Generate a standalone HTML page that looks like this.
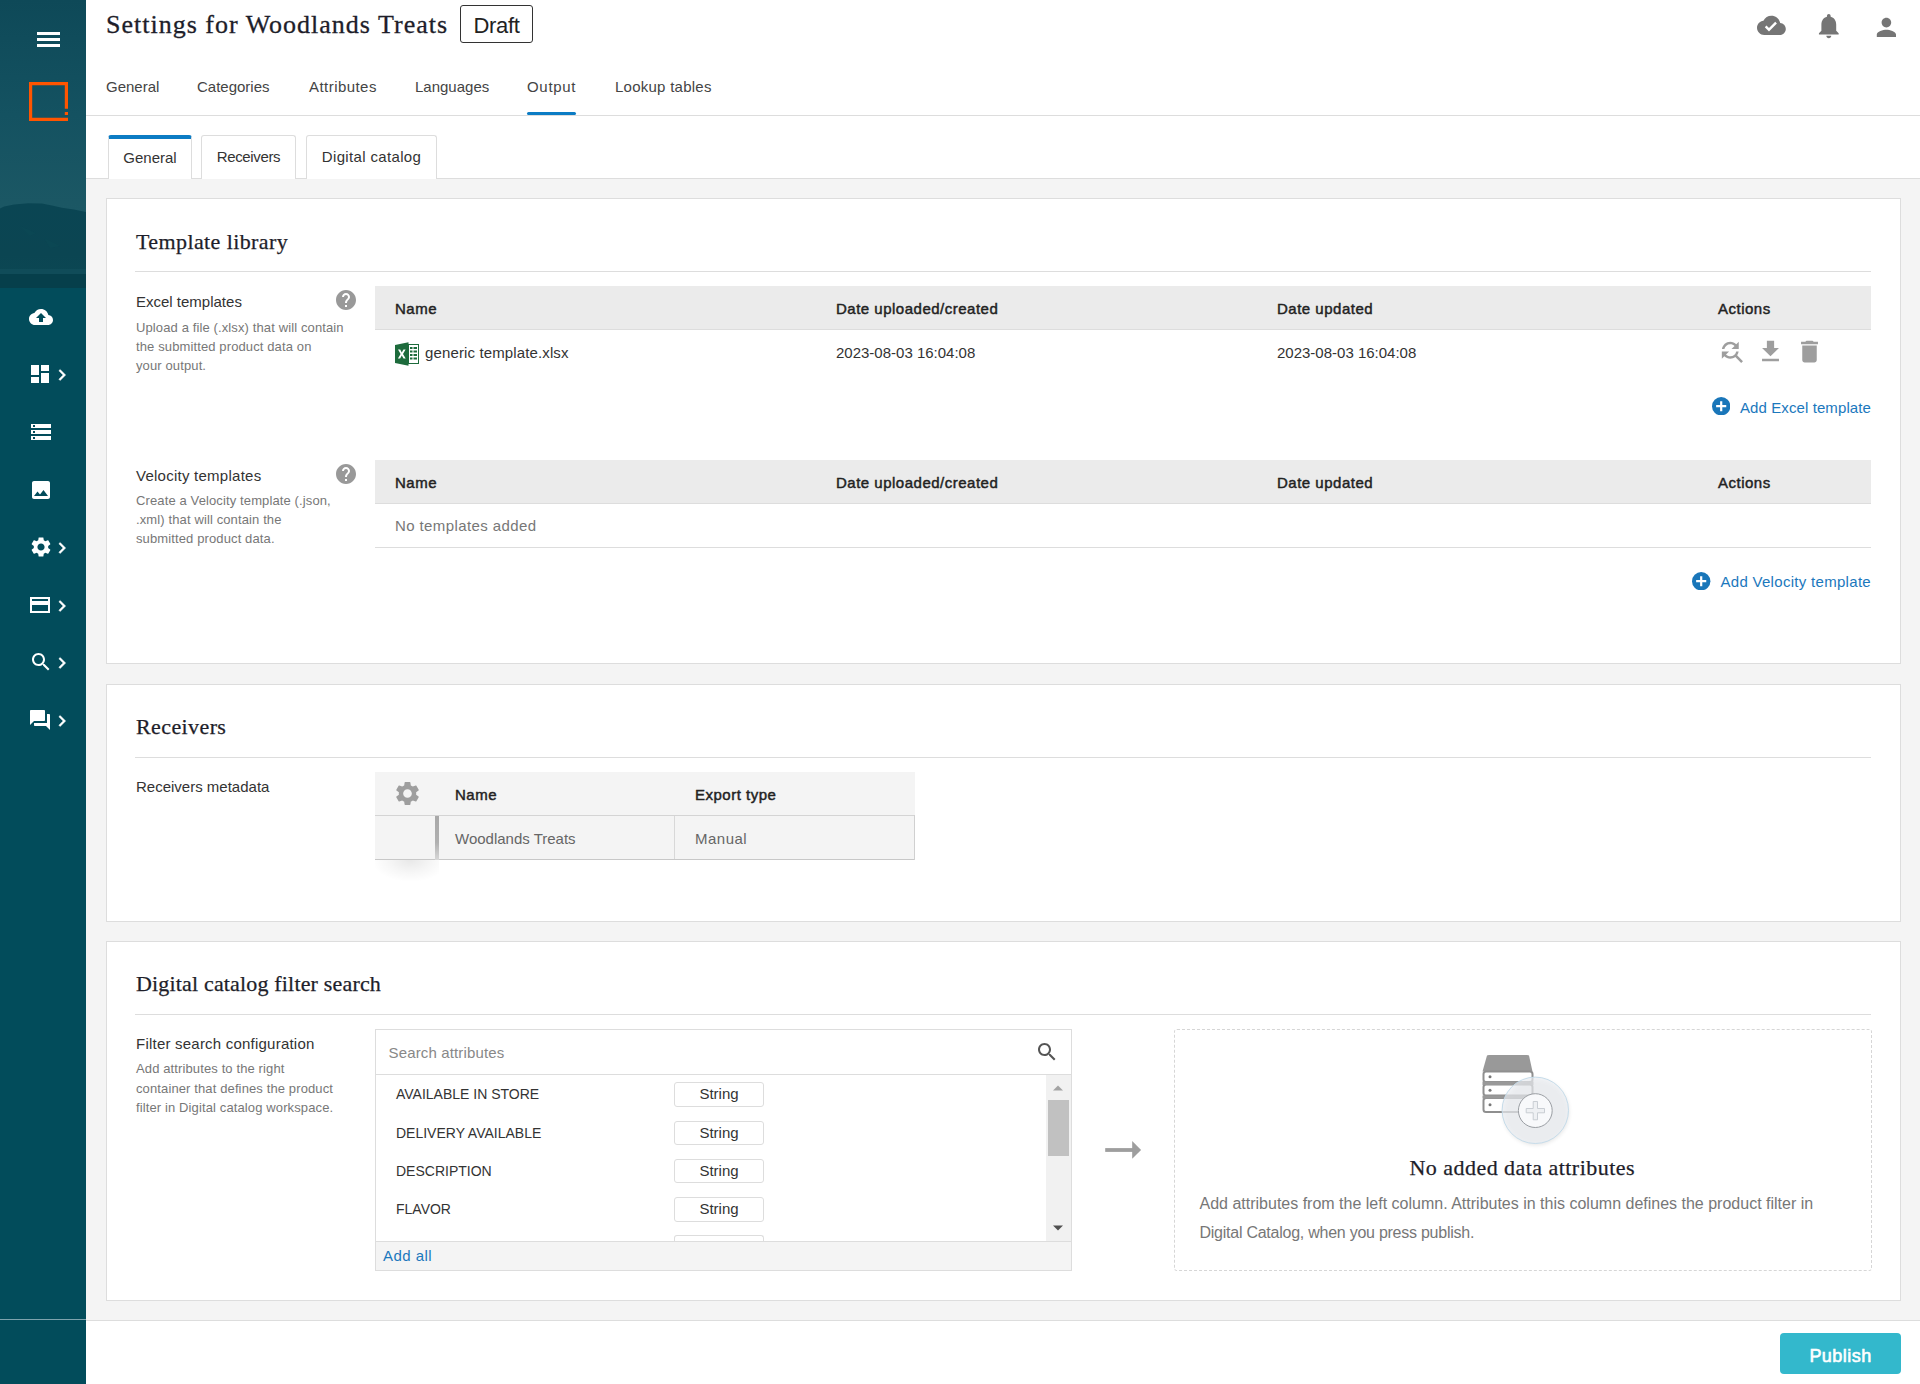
<!DOCTYPE html>
<html><head><meta charset="utf-8">
<style>
*{box-sizing:border-box;margin:0;padding:0}
html,body{width:1920px;height:1384px;overflow:hidden;background:#fff;font-family:"Liberation Sans",sans-serif;color:#333}
.abs{position:absolute}
#side{position:absolute;left:0;top:0;width:86px;height:1384px;background:#024c5b;overflow:hidden}
#side .ico{position:absolute;fill:#fff}
#side .chev{position:absolute;fill:#fff}
#hdr{position:absolute;left:86px;top:0;width:1834px;height:116px;background:#fff;border-bottom:1px solid #ddd}
.serif{font-family:"Liberation Serif",serif}
#title{position:absolute;left:20px;top:7px;font-size:26px;letter-spacing:1.0px;color:#1e1e2a;-webkit-text-stroke:0.3px #1e1e2a;white-space:nowrap;line-height:36px}
#draft{position:absolute;left:374px;top:5px;width:73px;height:38px;border:1px solid #333;border-radius:3px;font-size:22px;color:#222;text-align:center;line-height:40px;letter-spacing:-0.3px}
.nav{position:absolute;top:77px;font-size:15px;color:#444;line-height:20px;white-space:nowrap}
#navbar{position:absolute;left:441px;top:112px;width:49px;height:3px;background:#0c7cc4;border-radius:2px}
.hico{position:absolute;fill:#757575}
#sub{position:absolute;left:86px;top:116px;width:1834px;height:63px;background:#fff;border-bottom:1px solid #ddd}
.stab{position:absolute;top:19px;height:44px;border:1px solid #ddd;border-bottom:none;border-radius:3px 3px 0 0;background:#fff;font-size:15px;color:#333;line-height:42px;text-align:center;white-space:nowrap}
#main{position:absolute;left:86px;top:179px;width:1834px;height:1141px;background:#f4f4f4}
.card{position:absolute;left:20px;width:1795px;background:#fff;border:1px solid #ddd}
.h2{position:absolute;left:29px;font-family:"Liberation Serif",serif;font-size:22px;letter-spacing:0.4px;color:#1e1e2a;white-space:nowrap;line-height:28px;-webkit-text-stroke:0.25px #1e1e2a}
.divl{position:absolute;left:28px;width:1737px;height:1px;background:#ddd}
.lbl{position:absolute;left:29px;font-size:15px;color:#333;white-space:nowrap;line-height:20px}
.desc{position:absolute;left:29px;font-size:13px;color:#777;line-height:19px;white-space:nowrap;letter-spacing:0.12px}
.help{position:absolute;width:20px;height:20px;border-radius:50%;background:#999;color:#fff;font-weight:bold;font-size:15px;text-align:center;line-height:20px}
.thead{position:absolute;width:1496px;height:44px;background:#ebebeb;border-bottom:1px solid #ddd}
.th{position:absolute;top:12px;font-size:15px;font-weight:normal;-webkit-text-stroke:0.45px #222;color:#222;line-height:20px;white-space:nowrap;letter-spacing:0.5px}
.td{position:absolute;font-size:15px;color:#333;line-height:20px;white-space:nowrap}
.link{position:absolute;font-size:15px;color:#1b78bd;line-height:20px;white-space:nowrap}
.aico{fill:#9e9e9e}
.badge{position:absolute;width:90px;height:24.5px;border:1px solid #ddd;border-radius:3px;background:#fff;font-size:15px;color:#333;text-align:center;line-height:22.5px}
#foot{position:absolute;left:86px;top:1320px;width:1834px;height:64px;background:#fff;border-top:1px solid #ddd}
#publish{position:absolute;left:1694px;top:12px;width:121px;height:41px;background:#33b8cc;border-radius:4px;color:#fff;font-weight:normal;-webkit-text-stroke:0.6px #fff;letter-spacing:0.45px;font-size:18px;text-align:center;line-height:41px;padding-top:5px;line-height:36px}
</style></head><body>

<div id="side">
  <svg class="abs" style="left:0;top:0" width="86" height="288" viewBox="0 0 86 288">
    <defs>
      <linearGradient id="sky" x1="0" y1="0" x2="0" y2="1">
        <stop offset="0" stop-color="#0e4958"/>
        <stop offset="0.4" stop-color="#145261"/>
        <stop offset="0.7" stop-color="#1b5764"/>
        <stop offset="1" stop-color="#1e5a67"/>
      </linearGradient>
      <linearGradient id="mt" x1="0" y1="0" x2="0" y2="1">
        <stop offset="0" stop-color="#0a4553"/>
        <stop offset="0.6" stop-color="#0b4552"/>
        <stop offset="1" stop-color="#0c4854"/>
      </linearGradient>
    </defs>
    <rect width="86" height="288" fill="url(#sky)"/>
    <path d="M0 208.5 L4 206.5 L14 204.5 L28 203.3 L42 203.6 L52 205.5 L62 207.8 L74 209.5 L86 212 L86 288 L0 288 Z" fill="url(#mt)"/>
    <path d="M20 226 L36 233 L30 236 Z" fill="#11505c" opacity="0.2"/>
    <path d="M44 238 L60 246 L50 248 Z" fill="#11505c" opacity="0.2"/>
    <rect y="269" width="86" height="5" fill="#104c59"/>
    <rect y="274" width="86" height="14" fill="#063f4b"/>
  </svg>
  <div class="abs" style="left:37px;top:32px;width:22.5px;height:3px;background:#fff"></div>
  <div class="abs" style="left:37px;top:38px;width:22.5px;height:3px;background:#fff"></div>
  <div class="abs" style="left:37px;top:44px;width:22.5px;height:3px;background:#fff"></div>
  <svg class="abs" style="left:29px;top:82px" width="39" height="39" viewBox="0 0 39 39">
    <path d="M0 0H39V26.8H35.8V3.2H3.2V35.8H39V39H0Z" fill="#ff5500"/>
    <rect x="35.8" y="30" width="3.2" height="3" fill="#ff5500"/>
  </svg>
  <div class="abs" style="left:0;top:1319px;width:86px;height:1px;background:#7da3ad"></div>
  <svg class="ico" style="left:29px;top:305px" width="24" height="24" viewBox="0 0 24 24"><path d="M19.35 10.04C18.67 6.59 15.640 4 12 4 9.11 4 6.6 5.64 5.35 8.04 2.34 8.36 0 10.91 0 14c0 3.310 2.69 6 6 6h13c2.76 0 5-2.24 5-5 0-2.64-2.05-4.78-4.65-4.96zM14 13v4h-4v-4H7l5-5 5 5h-3z"/></svg>
  <svg class="ico" style="left:28px;top:362px" width="24" height="24" viewBox="0 0 24 24"><path d="M3 13h8V3H3v10zm0 8h8v-6H3v6zm10 0h8V11h-8v10zm0-18v6h8V3h-8z"/></svg>
  <svg class="ico" style="left:28.5px;top:420px" width="24" height="24" viewBox="0 0 24 24"><path d="M2 20h20v-4H2v4zm2-3h2v2H4v-2zM2 4v4h20V4H2zm4 3H4V5h2v2zm-4 7h20v-4H2v4zm2-3h2v2H4v-2z"/></svg>
  <svg class="ico" style="left:28.5px;top:478px" width="24" height="24" viewBox="0 0 24 24"><path d="M21 19V5c0-1.1-.9-2-2-2H5c-1.1 0-2 .9-2 2v14c0 1.1.9 2 2 2h14c1.1 0 2-.9 2-2zM8.5 13.5l2.5 3.01L14.5 12l4.5 6H5l3.5-4.5z"/></svg>
  <svg class="ico" style="left:28.5px;top:535px" width="24" height="24" viewBox="0 0 24 24"><path d="M19.14 12.94c.04-.3.06-.61.06-.94 0-.32-.02-.64-.07-.94l2.03-1.58c.18-.14.23-.41.12-.61l-1.92-3.32c-.12-.22-.37-.29-.59-.22l-2.39.96c-.5-.38-1.03-.7-1.62-.94l-.36-2.54c-.04-.24-.24-.41-.48-.41h-3.84c-.24 0-.43.17-.47.41l-.36 2.54c-.59.24-1.13.57-1.62.94l-2.39-.96c-.22-.08-.47 0-.59.22L2.74 8.87c-.12.21-.08.47.12.61l2.03 1.58c-.05.3-.09.63-.09.94s.02.64.07.94l-2.030 1.58c-.18.14-.23.41-.12.61l1.92 3.32c.12.22.37.29.59.22l2.39-.96c.5.38 1.03.7 1.62.94l.36 2.54c.05.24.24.41.48.41h3.84c.24 0 .44-.17.47-.41l.36-2.54c.59-.24 1.13-.56 1.62-.94l2.39.96c.22.08.47 0 .59-.22l1.92-3.32c.12-.22.07-.47-.12-.61l-2.01-1.58zM12 15.6c-1.98 0-3.6-1.62-3.6-3.6s1.62-3.6 3.6-3.6 3.6 1.62 3.6 3.6-1.62 3.6-3.6 3.6z"/></svg>
  <svg class="ico" style="left:28px;top:593px" width="24" height="24" viewBox="0 0 24 24"><path fill-rule="evenodd" d="M2 4h20v16H2zM4 12v6h16v-6zM4 6v2h16V6z"/></svg>
  <svg class="ico" style="left:28.5px;top:650px" width="24" height="24" viewBox="0 0 24 24"><path d="M15.5 14h-.79l-.28-.27C15.41 12.59 16 11.110 16 9.5 16 5.91 13.09 3 9.5 3S3 5.91 3 9.5 5.91 16 9.5 16c1.61 0 3.09-.59 4.23-1.57l.27.28v.79l5 4.99L20.49 19l-4.99-5zm-6 0C7.01 14 5 11.99 5 9.5S7.01 5 9.5 5 14 7.01 14 9.5 11.99 14 9.5 14z"/></svg>
  <svg class="ico" style="left:28.2px;top:708px" width="24" height="24" viewBox="0 0 24 24"><path d="M21 6h-2v9H6v2c0 .55.45 1 1 1h11l4 4V7c0-.55-.45-1-1-1zm-4 6V3c0-.55-.45-1-1-1H3c-.55 0-1 .45-1 1v14l4-4h10c.55 0 1-.45 1-1z"/></svg>
  <svg class="chev" style="left:51px;top:364px" width="22" height="22" viewBox="0 0 24 24"><path d="M10 6L8.59 7.41 13.17 12l-4.58 4.59L10 18l6-6z" stroke="#fff" stroke-width="0.5"/></svg>
  <svg class="chev" style="left:51px;top:537px" width="22" height="22" viewBox="0 0 24 24"><path d="M10 6L8.59 7.41 13.17 12l-4.58 4.59L10 18l6-6z" stroke="#fff" stroke-width="0.5"/></svg>
  <svg class="chev" style="left:51px;top:595px" width="22" height="22" viewBox="0 0 24 24"><path d="M10 6L8.59 7.41 13.17 12l-4.58 4.59L10 18l6-6z" stroke="#fff" stroke-width="0.5"/></svg>
  <svg class="chev" style="left:51px;top:652px" width="22" height="22" viewBox="0 0 24 24"><path d="M10 6L8.59 7.41 13.17 12l-4.58 4.59L10 18l6-6z" stroke="#fff" stroke-width="0.5"/></svg>
  <svg class="chev" style="left:51px;top:710px" width="22" height="22" viewBox="0 0 24 24"><path d="M10 6L8.59 7.41 13.17 12l-4.58 4.59L10 18l6-6z" stroke="#fff" stroke-width="0.5"/></svg>
</div>

<div id="hdr">
  <div id="title" class="serif">Settings for Woodlands Treats</div>
  <div id="draft">Draft</div>
  <div class="nav" style="left:20px">General</div>
  <div class="nav" style="left:111px">Categories</div>
  <div class="nav" style="left:223px;letter-spacing:0.45px">Attributes</div>
  <div class="nav" style="left:329px">Languages</div>
  <div class="nav" style="left:441px;letter-spacing:0.7px">Output</div>
  <div class="nav" style="left:529px;letter-spacing:0.25px">Lookup tables</div>
  <div id="navbar"></div>
</div>

<div id="sub">
  <div class="stab" style="left:22px;width:84px;border-top:4px solid #0c7cc4;line-height:37px">General</div>
  <div class="stab" style="left:115px;width:95px;letter-spacing:-0.35px">Receivers</div>
  <div class="stab" style="left:220px;width:131px;letter-spacing:0.35px">Digital catalog</div>
</div>

<div id="main">
  <div class="card" id="c1" style="top:19px;height:466px"></div>
  <div class="card" id="c2" style="top:505px;height:238px"></div>
  <div class="card" id="c3" style="top:762px;height:360px"></div>
</div>


<div id="layer" class="abs" style="left:0;top:0;width:1920px;height:1384px">
  <!-- header icons -->
  <svg class="hico" style="left:1757px;top:10.8px" width="28.8" height="28.8" viewBox="0 0 24 24"><path d="M19.35 10.04C18.67 6.59 15.64 4 12 4 9.11 4 6.6 5.64 5.35 8.04 2.34 8.36 0 10.91 0 14c0 3.31 2.69 6 6 6h13c2.76 0 5-2.24 5-5 0-2.64-2.05-4.78-4.65-4.96zM10 17l-3.5-3.5 1.41-1.41L10 14.17 15.18 9l1.41 1.41L10 17z"/></svg>
  <svg class="hico" style="left:1814px;top:10.9px" width="29.6" height="29.6" viewBox="0 0 24 24"><path d="M12 22c1.1 0 2-.9 2-2h-4c0 1.1.89 2 2 2zm6-6v-5c0-3.07-1.64-5.64-4.5-6.32V4c0-.83-.67-1.5-1.5-1.5s-1.5.67-1.5 1.5v.68C7.63 5.36 6 7.92 6 11v5l-2 2v1h16v-1l-2-2z"/></svg>
  <svg class="hico" style="left:1872px;top:12.9px" width="28.8" height="28.8" viewBox="0 0 24 24"><path d="M12 12c2.21 0 4-1.79 4-4s-1.79-4-4-4-4 1.790-4 4 1.79 4 4 4zm0 2c-2.67 0-8 1.34-8 4v2h16v-2c0-2.66-5.33-4-8-4z"/></svg>

  <!-- CARD 1 -->
  <div class="h2 abs" style="left:136px;top:228px">Template library</div>
  <div class="abs" style="left:135px;top:271px;width:1736px;height:1px;background:#ddd"></div>

  <div class="lbl" style="left:136px;top:292px">Excel templates</div>
  <div class="desc" style="left:136px;top:318px">Upload a file (.xlsx) that will contain<br>the submitted product data on<br>your output.</div>
  <svg class="abs" style="left:334px;top:288px;fill:#999" width="24" height="24" viewBox="0 0 24 24"><path d="M12 2C6.48 2 2 6.48 2 12s4.48 10 10 10 10-4.48 10-10S17.52 2 12 2zm1 17h-2v-2h2v2zm2.07-7.75l-.9.92C13.45 12.9 13 13.5 13 15h-2v-.5c0-1.1.45-2.1 1.170-2.83l1.24-1.26c.37-.36.59-.86.59-1.41 0-1.1-.9-2-2-2s-2 .9-2 2H8c0-2.21 1.79-4 4-4s4 1.79 4 4c0 .88-.36 1.68-.93 2.25z"/></svg>

  <div class="thead" style="left:375px;top:286px"></div>
  <div class="th" style="left:395px;top:299px">Name</div>
  <div class="th" style="left:836px;top:299px">Date uploaded/created</div>
  <div class="th" style="left:1277px;top:299px">Date updated</div>
  <div class="th" style="left:1718px;top:299px">Actions</div>

  <svg class="abs" style="left:395px;top:342px" width="24" height="24" viewBox="0 0 24 24">
    <path d="M0 3 L13.5 0.3 V23.7 L0 21 Z" fill="#1d6b3c"/>
    <rect x="13.5" y="2.5" width="10" height="19" fill="#fff" stroke="#1d6b3c" stroke-width="1"/>
    <g fill="#1d6b3c"><rect x="15" y="5" width="2.5" height="2"/><rect x="18.5" y="5" width="3.5" height="2"/><rect x="15" y="8.5" width="2.5" height="2"/><rect x="18.5" y="8.5" width="3.5" height="2"/><rect x="15" y="12" width="2.5" height="2"/><rect x="18.5" y="12" width="3.5" height="2"/><rect x="15" y="15.5" width="2.5" height="2"/><rect x="18.5" y="15.5" width="3.5" height="2"/></g>
    <path d="M3 7.5h2.2l1.6 2.9 1.6-2.9h2.2l-2.6 4.5 2.7 4.5H8.5l-1.7-3-1.7 3H2.9l2.7-4.5z" fill="#fff"/>
  </svg>
  <div class="td" style="left:425px;top:343px;letter-spacing:0.13px">generic template.xlsx</div>
  <div class="td" style="left:836px;top:343px">2023-08-03 16:04:08</div>
  <div class="td" style="left:1277px;top:343px">2023-08-03 16:04:08</div>

  <svg class="abs aico" style="left:1717.2px;top:336.8px" width="29" height="29" viewBox="0 0 24 24"><path d="M11 6c1.38 0 2.63.56 3.54 1.46L12 10h6V4l-2.05 2.05C14.68 4.78 12.93 4 11 4c-3.53 0-6.43 2.61-6.92 6H6.1c.46-2.28 2.48-4 4.9-4zm5.64 9.14c.66-.9 1.12-1.97 1.28-3.14H15.9c-.46 2.28-2.48 4-4.9 4-1.38 0-2.63-.56-3.54-1.46L10 12H4v6l2.05-2.05C7.32 17.22 9.07 18 11 18c1.55 0 2.98-.51 4.14-1.36L20 21.49 21.49 20l-4.85-4.86z"/></svg>
  <svg class="abs aico" style="left:1756px;top:336.8px" width="29" height="29" viewBox="0 0 24 24"><path d="M19 9h-4V3H9v6H5l7 7 7-7zM5 18v2h14v-2H5z"/></svg>
  <svg class="abs aico" style="left:1794.5px;top:337px" width="29" height="29" viewBox="0 0 24 24"><path d="M6 19c0 1.1.9 2 2 2h8c1.1 0 2-.9 2-2V7H6v12zM19 4h-3.5l-1-1h-5l-1 1H5v2h14V4z"/></svg>

  <svg class="abs" style="left:1711.7px;top:396.7px" width="18.4" height="18.4" viewBox="0 0 20 20"><circle cx="10" cy="10" r="10" fill="#1976b9"/><path d="M8.8 4.5h2.4v4.3h4.3v2.4h-4.3v4.3H8.8v-4.3H4.5V8.8h4.3z" fill="#fff"/></svg>
  <div class="link" style="right:49px;top:398px;letter-spacing:0.1px">Add Excel template</div>

  <div class="lbl" style="left:136px;top:466px;letter-spacing:0.25px">Velocity templates</div>
  <div class="desc" style="left:136px;top:491px">Create a Velocity template (.json,<br>.xml) that will contain the<br>submitted product data.</div>
  <svg class="abs" style="left:334px;top:461.8px;fill:#999" width="24" height="24" viewBox="0 0 24 24"><path d="M12 2C6.48 2 2 6.48 2 12s4.48 10 10 10 10-4.48 10-10S17.52 2 12 2zm1 17h-2v-2h2v2zm2.07-7.75l-.9.92C13.45 12.9 13 13.5 13 15h-2v-.5c0-1.1.45-2.1 1.170-2.83l1.24-1.26c.37-.36.59-.86.59-1.41 0-1.1-.9-2-2-2s-2 .9-2 2H8c0-2.21 1.79-4 4-4s4 1.79 4 4c0 .88-.36 1.68-.93 2.25z"/></svg>

  <div class="thead" style="left:375px;top:460px"></div>
  <div class="th" style="left:395px;top:473px">Name</div>
  <div class="th" style="left:836px;top:473px">Date uploaded/created</div>
  <div class="th" style="left:1277px;top:473px">Date updated</div>
  <div class="th" style="left:1718px;top:473px">Actions</div>
  <div class="td" style="left:395px;top:516px;color:#777;letter-spacing:0.4px">No templates added</div>
  <div class="abs" style="left:375px;top:547px;width:1496px;height:1px;background:#ddd"></div>

  <svg class="abs" style="left:1692.3px;top:571.8px" width="18.4" height="18.4" viewBox="0 0 20 20"><circle cx="10" cy="10" r="10" fill="#1976b9"/><path d="M8.8 4.5h2.4v4.3h4.3v2.4h-4.3v4.3H8.8v-4.3H4.5V8.8h4.3z" fill="#fff"/></svg>
  <div class="link" style="right:49px;top:572px;letter-spacing:0.3px">Add Velocity template</div>

  
  <div class="h2 abs" style="left:136px;top:713px">Receivers</div>
  <div class="abs" style="left:135px;top:757px;width:1736px;height:1px;background:#ddd"></div>
  <div class="lbl" style="left:136px;top:777px">Receivers metadata</div>

  <div class="abs" style="left:375px;top:772px;width:540px;height:88px;background:#f4f4f4"></div>
  <div class="abs" style="left:375px;top:815px;width:540px;height:1px;background:#d4d4d4"></div>
  <div class="abs" style="left:375px;top:859px;width:540px;height:1px;background:#c8c8c8"></div>
  <div class="abs" style="left:914px;top:815px;width:1px;height:45px;background:#d0d0d0"></div>
  <div class="abs" style="left:674px;top:816px;width:1px;height:43px;background:#d8d8d8"></div>
  <div class="abs" style="left:434.6px;top:816px;width:4.2px;height:44px;background:linear-gradient(#a8a8a8,#b0b0b0 60%,#d8d8d8)"></div>
  <div class="abs" style="left:375px;top:860px;width:64px;height:22px;background:radial-gradient(ellipse 60% 100% at 55% 0%,rgba(0,0,0,0.09),rgba(0,0,0,0.03) 60%,rgba(0,0,0,0) 100%)"></div>
  <svg class="abs aico" style="left:393.2px;top:779px" width="29" height="29" viewBox="0 0 24 24"><path d="M19.14 12.94c.04-.3.06-.61.06-.94 0-.32-.02-.64-.07-.94l2.03-1.58c.18-.14.23-.41.12-.61l-1.92-3.32c-.12-.22-.37-.29-.59-.22l-2.39.96c-.5-.38-1.03-.7-1.62-.94l-.36-2.54c-.04-.24-.24-.41-.48-.41h-3.84c-.24 0-.43.17-.47.41l-.36 2.54c-.59.24-1.13.57-1.62.94l-2.39-.96c-.22-.08-.47 0-.59.22L2.74 8.87c-.12.21-.08.47.12.61l2.03 1.58c-.05.3-.09.63-.09.94s.02.64.07.94l-2.03 1.58c-.18.14-.23.41-.12.61l1.92 3.32c.12.22.37.29.59.22l2.39-.96c.5.38 1.03.7 1.62.94l.36 2.54c.05.24.24.41.48.41h3.84c.24 0 .44-.17.47-.41l.36-2.54c.59-.24 1.13-.56 1.62-.94l2.39.96c.22.08.47 0 .59-.22l1.92-3.32c.12-.22.07-.47-.12-.61l-2.01-1.58zM12 15.6c-1.98 0-3.6-1.62-3.6-3.6s1.62-3.6 3.6-3.6 3.6 1.62 3.6 3.6-1.62 3.6-3.6 3.6z"/></svg>
  <div class="th" style="left:455px;top:785px">Name</div>
  <div class="th" style="left:695px;top:785px">Export type</div>
  <div class="td" style="left:455px;top:829px;color:#666">Woodlands Treats</div>
  <div class="td" style="left:695px;top:829px;color:#666;letter-spacing:0.5px">Manual</div>

  
  <div class="h2 abs" style="left:136px;top:970px;letter-spacing:0.17px">Digital catalog filter search</div>
  <div class="abs" style="left:135px;top:1014px;width:1736px;height:1px;background:#ddd"></div>
  <div class="lbl" style="left:136px;top:1034px;letter-spacing:0.22px">Filter search configuration</div>
  <div class="desc" style="left:136px;top:1059px;line-height:19.5px">Add attributes to the right<br>container that defines the product<br>filter in Digital catalog workspace.</div>

  <div class="abs" style="left:375px;top:1029px;width:697px;height:242px;border:1px solid #ddd;background:#fff"></div>
  <div class="abs" style="left:376px;top:1074px;width:695px;height:1px;background:#ddd"></div>
  <div class="td" style="left:388.5px;top:1043px;color:#888;letter-spacing:0.15px">Search attributes</div>
  <svg class="abs" style="left:1034.6px;top:1039.9px;fill:#555" width="24" height="24" viewBox="0 0 24 24"><path d="M15.5 14h-.79l-.28-.27C15.41 12.59 16 11.11 16 9.5 16 5.91 13.09 3 9.5 3S3 5.91 3 9.5 5.91 16 9.5 16c1.61 0 3.09-.59 4.23-1.57l.27.28v.79l5 4.99L20.49 19l-4.99-5zm-6 0C7.01 14 5 11.99 5 9.5S7.01 5 9.5 5 14 7.01 14 9.5 11.99 14 9.5 14z"/></svg>
  <div class="td" style="left:396px;top:1084.3px;font-size:14px;color:#333">AVAILABLE IN STORE</div>
  <div class="badge" style="left:674px;top:1082.3px">String</div>
  <div class="td" style="left:396px;top:1122.6px;font-size:14px;color:#333">DELIVERY AVAILABLE</div>
  <div class="badge" style="left:674px;top:1120.6px">String</div>
  <div class="td" style="left:396px;top:1160.9px;font-size:14px;color:#333">DESCRIPTION</div>
  <div class="badge" style="left:674px;top:1158.9px">String</div>
  <div class="td" style="left:396px;top:1199.2px;font-size:14px;color:#333">FLAVOR</div>
  <div class="badge" style="left:674px;top:1197.2px">String</div>
  <div class="badge" style="left:674px;top:1235.4px;height:6px;border-bottom:none;border-radius:3px 3px 0 0"></div>

  <div class="abs" style="left:1046px;top:1075px;width:25px;height:166px;background:#f1f1f1"></div>
  <div class="abs" style="left:1048px;top:1100.2px;width:21px;height:55.5px;background:#c1c1c1"></div>
  <svg class="abs" style="left:1052px;top:1084px" width="12" height="8" viewBox="0 0 12 8"><path d="M1 6.5L6 1.5 11 6.5Z" fill="#a3a3a3"/></svg>
  <svg class="abs" style="left:1052px;top:1224px" width="12" height="8" viewBox="0 0 12 8"><path d="M1 1.5L6 6.5 11 1.5Z" fill="#505050"/></svg>
  <div class="abs" style="left:376px;top:1241px;width:695px;height:29px;background:#f4f4f4;border-top:1px solid #ddd"></div>
  <div class="link" style="left:383px;top:1246px;letter-spacing:0.45px">Add all</div>

  <svg class="abs" style="left:1104px;top:1140px" width="40" height="20" viewBox="0 0 40 20"><rect x="1.2" y="8.1" width="28" height="3.8" fill="#9e9e9e"/><path d="M28.2 0.9 L37.1 9.9 L28.2 18.8Z" fill="#9e9e9e"/></svg>

  <div class="abs" style="left:1174px;top:1029px;width:698px;height:242px;border:1px dashed #d6d6d6;border-radius:3px"></div>
  <svg class="abs" style="left:1470px;top:1045px" width="110" height="110" viewBox="0 0 110 110">
    <defs><filter id="sh" x="-30%" y="-30%" width="160%" height="160%"><feGaussianBlur stdDeviation="2"/></filter></defs>
    <path d="M17 10.5 Q17.5 9.9 19 9.9 H57 Q58.5 9.9 59 10.5 L62.5 26.5 H12.5Z" fill="#999"/>
    <g>
      <rect x="13.5" y="26.5" width="49" height="10.5" rx="2.5" fill="#fff" stroke="#8f8f8f" stroke-width="2"/>
      <rect x="13.5" y="39.5" width="49" height="11" rx="2.5" fill="#fff" stroke="#8f8f8f" stroke-width="2"/>
      <rect x="13.5" y="53" width="49" height="14" rx="2.5" fill="#fff" stroke="#8f8f8f" stroke-width="2"/>
      <rect x="12.5" y="36.5" width="51" height="3.5" fill="#999"/>
      <rect x="12.5" y="50.5" width="51" height="3" fill="#999"/>
      <circle cx="20" cy="31.8" r="1.5" fill="#777"/>
      <circle cx="20" cy="45.2" r="1.5" fill="#777"/>
      <circle cx="20" cy="59.8" r="1.5" fill="#777"/>
    </g>
    <circle cx="66" cy="67" r="33" fill="#000" opacity="0.10" filter="url(#sh)"/>
    <circle cx="65.3" cy="65.3" r="33.2" fill="#ecf0f4" fill-opacity="0.7" stroke="#c6dcea" stroke-width="1"/>
    <circle cx="65.3" cy="65.6" r="16.9" fill="#f8f9fb" stroke="#9a9ea3" stroke-width="1"/>
    <path d="M63.2 56.5h4.3v7h7v4.3h-7v7h-4.3v-7h-7v-4.3h7z" fill="#eef0f3" stroke="#c4c9cf" stroke-width="0.9"/>
  </svg>
  <div class="h2 abs" style="left:1409.5px;top:1154px;letter-spacing:0.46px">No added data attributes</div>
  <div class="abs" style="left:1199.5px;top:1189px;font-size:16px;line-height:29px;color:#777;white-space:nowrap">Add attributes from the left column. Attributes in this column defines the product filter in<br><span style="letter-spacing:-0.25px">Digital Catalog, when you press publish.</span></div>

</div>

<div id="foot">
  <div id="publish">Publish</div>
</div>

</body></html>
